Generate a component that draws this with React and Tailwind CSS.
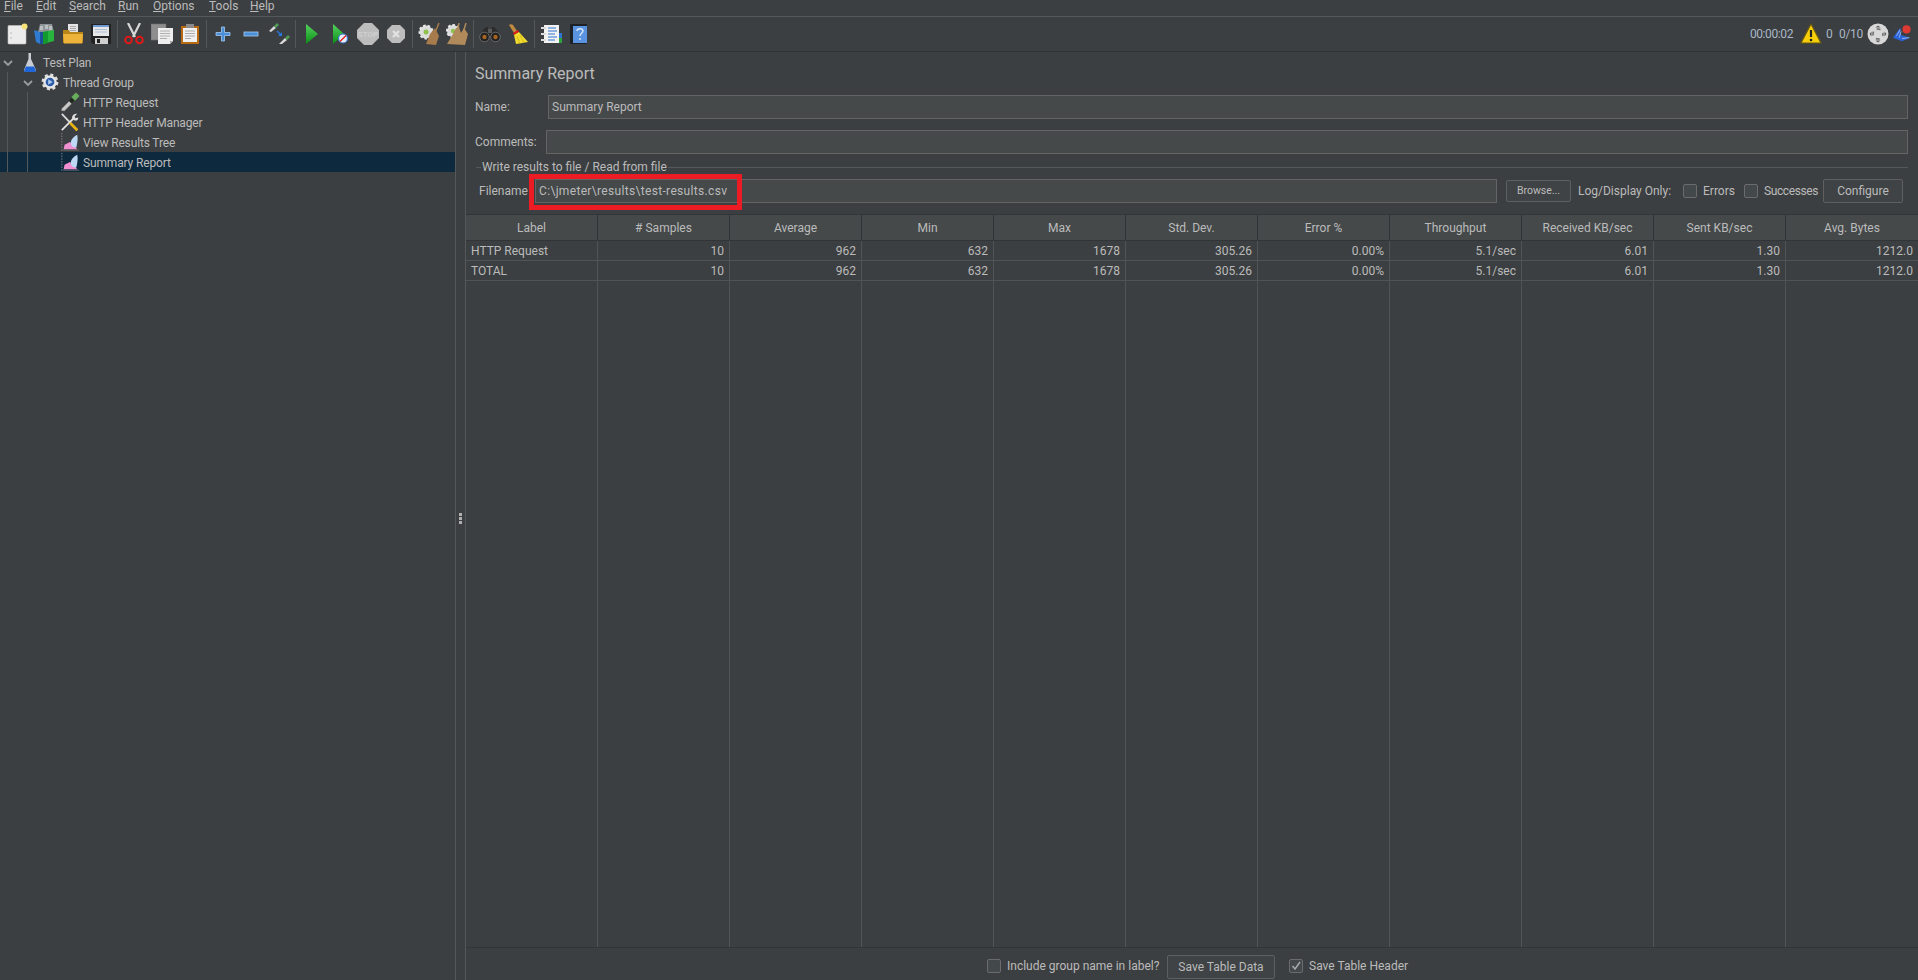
const FONT = 'font-["Roboto",sans-serif]';

const menus = [
  ['F', 'ile', 'w-[32px]'],
  ['E', 'dit', 'w-[33px]'],
  ['S', 'earch', 'w-[49px]'],
  ['R', 'un', 'w-[35px]'],
  ['O', 'ptions', 'w-[56px]'],
  ['T', 'ools', 'w-[41px]'],
  ['H', 'elp', 'w-[30px]'],
];

const columns = ['Label', '# Samples', 'Average', 'Min', 'Max', 'Std. Dev.', 'Error %', 'Throughput', 'Received KB/sec', 'Sent KB/sec', 'Avg. Bytes'];

const rows = [
  ['HTTP Request', '10', '962', '632', '1678', '305.26', '0.00%', '5.1/sec', '6.01', '1.30', '1212.0'],
  ['TOTAL', '10', '962', '632', '1678', '305.26', '0.00%', '5.1/sec', '6.01', '1.30', '1212.0'],
];

function Ico({ children, w = 22, h = 22 }) {
  return (
    <svg width={w} height={h} viewBox="0 0 22 22" className="block shrink-0">
      {children}
    </svg>
  );
}

function NewIcon() {
  return (
    <Ico>
      <rect x="2" y="2.500" width="18" height="18.500" rx="1" fill="#ececec" stroke="#c4c4c4" strokeWidth="0.6" />
      <circle cx="18.500" cy="3.500" r="3" fill="#f7e27a" />
      <circle cx="5" cy="10" r="0.7" fill="#aaa" />
      <circle cx="5" cy="15" r="0.7" fill="#aaa" />
    </Ico>
  );
}

function TemplatesIcon() {
  return (
    <Ico>
      <path d="M4 9l2-8h12l2 8z" fill="#8d9397" />
      <path d="M6 3h3v4H6zM11 2h3v4h-3zM15 3h3v4h-3z" fill="#b9bec0" />
      <path d="M0 7l6 2v12l-4-2z" fill="#2e7bd0" />
      <path d="M6 9h3v12H6z" fill="#1d4f9a" />
      <path d="M9 9l11-2v11L9 21z" fill="#27b33c" />
      <path d="M9 9l5-1v12l-5 1z" fill="#129a2e" />
    </Ico>
  );
}

function OpenIcon() {
  return (
    <Ico>
      <path d="M6 1h10v10H6z" fill="#e4e4e4" />
      <path d="M8 3.500h6M8 5.500h6M8 7.500h6" stroke="#9a9a9a" strokeWidth="0.8" />
      <path d="M1 7h6l1 2h13v11H1z" fill="#b88518" />
      <path d="M1 11h20l-1 9.500H2z" fill="#eeb33b" />
    </Ico>
  );
}

function SaveIcon() {
  return (
    <Ico>
      <path d="M1 1h20v20H3l-2-2z" fill="#222" />
      <rect x="3" y="2" width="16" height="11" fill="#e7e7e7" />
      <rect x="3" y="2" width="16" height="2" fill="#6f9ad3" />
      <path d="M5 6.500h12M5 9h12" stroke="#9fb6d2" strokeWidth="0.8" />
      <rect x="5" y="15" width="13" height="6" fill="#cfcfcf" />
      <rect x="7" y="16" width="3" height="4" fill="#222" />
    </Ico>
  );
}

function CutIcon() {
  return (
    <Ico>
      <path d="M5 0l7 14M17 0L10 14" stroke="#d8d8d8" strokeWidth="2.200" />
      <circle cx="5.500" cy="17" r="3.300" fill="none" stroke="#e01818" strokeWidth="2" />
      <circle cx="16.500" cy="17" r="3.300" fill="none" stroke="#e01818" strokeWidth="2" />
    </Ico>
  );
}

function CopyIcon() {
  return (
    <Ico>
      <rect x="0" y="1" width="15" height="16" fill="#8e8e8e" stroke="#6e6e6e" strokeWidth="0.6" />
      <path d="M7 5h15v13l-3 3H7z" fill="#eeeeee" />
      <path d="M19 21v-3h3z" fill="#aaa" />
      <path d="M9 8h10M9 10.500h10M9 13h10M9 15.500h7" stroke="#a0a0a0" strokeWidth="0.8" />
    </Ico>
  );
}

function PasteIcon() {
  return (
    <Ico>
      <rect x="2" y="3" width="18" height="18" fill="#b86a10" />
      <rect x="4" y="5" width="14" height="14" fill="#f1f1f1" />
      <rect x="7" y="1" width="8" height="4" fill="#8b8b8b" />
      <path d="M6 8h10M6 10.500h10M6 13h10M6 15.500h6" stroke="#9a9a9a" strokeWidth="0.8" />
    </Ico>
  );
}

function PlusIcon() {
  return (
    <Ico>
      <path d="M9.500 4h3v5.500H18v3h-5.500V18h-3v-5.500H4v-3h5.500z" fill="#4a90d9" stroke="#a7c8ee" strokeWidth="0.8" />
    </Ico>
  );
}

function MinusIcon() {
  return (
    <Ico>
      <rect x="4" y="9" width="14" height="4" fill="#4a90d9" stroke="#a7c8ee" strokeWidth="0.8" />
    </Ico>
  );
}

function ToggleIcon() {
  return (
    <Ico>
      <path d="M1 8l5-5 2 2-5 4z" fill="#d8d8d8" />
      <path d="M6 3l3-3 2 2-3 3z" fill="#4f9a55" />
      <path d="M9 8l4 4" stroke="#2478e0" strokeWidth="1.200" />
      <path d="M14 13V9l-4 4z" fill="#2478e0" />
      <path d="M11 21l6-6 2 2-5 4z" fill="#d8d8d8" />
      <path d="M17 15l3-3 2 2-3 3z" fill="#4f9a55" />
    </Ico>
  );
}

function PlayIcon() {
  return (
    <Ico>
      <defs>
        <linearGradient id="pg" x1="0" y1="0" x2="0" y2="1">
          <stop offset="0" stopColor="#54d25e" />
          <stop offset="1" stopColor="#0b8f16" />
        </linearGradient>
      </defs>
      <path d="M5 1l12 10L5 21z" fill="url(#pg)" />
    </Ico>
  );
}

function PlayNoTimerIcon() {
  return (
    <Ico>
      <path d="M4 1l11 10L4 21z" fill="url(#pg)" />
      <circle cx="14" cy="15.500" r="4.500" fill="#e8eef7" stroke="#3a78d0" strokeWidth="1.200" />
      <path d="M11 18.500l6-6" stroke="#e01818" strokeWidth="1.300" />
    </Ico>
  );
}

function StopIcon() {
  return (
    <Ico>
      <path d="M7 0h8l7 7v8l-7 7H7l-7-7V7z" fill="#bdbdbd" />
      <text x="11" y="14" textAnchor="middle" fontSize="8" fontWeight="700" fill="#cfcfcf">STOP</text>
    </Ico>
  );
}

function ShutdownIcon() {
  return (
    <Ico>
      <path d="M7 2h8l5 5v8l-5 5H7l-5-5V7z" fill="#bdbdbd" />
      <path d="M8 8l6 6M14 8l-6 6" stroke="#e2e2e2" strokeWidth="2.400" />
    </Ico>
  );
}

function ClearIcon() {
  return (
    <Ico>
      <circle cx="8" cy="9" r="6.500" fill="#dcdcdc" stroke="#e8e8e8" strokeWidth="2" strokeDasharray="2.500 2" />
      <circle cx="8" cy="9" r="2.500" fill="#8ec04a" />
      <path d="M17 5l-5 6-4 10 10 1 3-9z" fill="#a77b4c" />
      <path d="M21 0l-4 10" stroke="#a77b4c" strokeWidth="1.500" />
    </Ico>
  );
}

function ClearAllIcon() {
  return (
    <Ico>
      <circle cx="7" cy="8" r="6" fill="#dcdcdc" stroke="#e8e8e8" strokeWidth="2" strokeDasharray="2.500 2" />
      <circle cx="7" cy="8" r="2.200" fill="#8ec04a" />
      <path d="M10 5L7 11 1 21l18 1 3-11-4-6-3 5-2-6z" fill="#b18a5b" />
      <path d="M13 0l-2 9M20 0l-3 10" stroke="#b18a5b" strokeWidth="1.500" />
    </Ico>
  );
}

function SearchIcon() {
  return (
    <Ico>
      <path d="M4 7l3-3h2v4h4V4h2l3 3 3 6H1z" fill="#2c2c2c" />
      <rect x="9" y="6" width="4" height="4" fill="#5a5a5a" />
      <circle cx="5.500" cy="14" r="4.800" fill="#222" stroke="#777" strokeWidth="0.8" />
      <circle cx="16.500" cy="14" r="4.800" fill="#222" stroke="#777" strokeWidth="0.8" />
      <circle cx="5.500" cy="14" r="2.200" fill="#a8641e" />
      <circle cx="16.500" cy="14" r="2.200" fill="#a8641e" />
    </Ico>
  );
}

function BroomIcon() {
  return (
    <Ico>
      <path d="M2 2c1-1 3-1 4 0l4 6-3 2z" fill="#c08a40" />
      <path d="M6 10l5-3 1 2-5 3z" fill="#e01818" />
      <path d="M7 12l5-3 9 10-12 2z" fill="#f2dc2e" />
      <path d="M10 13l3 8M13 12l4 8" stroke="#c9a90e" strokeWidth="0.7" />
    </Ico>
  );
}

function FunctionIcon() {
  return (
    <Ico>
      <rect x="4" y="2" width="15" height="18" fill="#f2f2f2" />
      <path d="M8 5h8M8 8h9M8 11h7M8 14h9M8 17h7" stroke="#2f74d0" strokeWidth="1" />
      <path d="M1 5h5M1 11h5M1 17h5" stroke="#dcdcdc" strokeWidth="2" />
      <rect x="19" y="10" width="3" height="5" fill="#2f74d0" />
      <rect x="19" y="15" width="3" height="5" fill="#2ea23c" />
    </Ico>
  );
}

function HelpIcon() {
  return (
    <Ico>
      <rect x="2" y="1" width="17" height="20" rx="1" fill="#1d2126" />
      <rect x="5" y="3" width="14" height="17" fill="#5a94e0" />
      <path d="M9 8c0-3 6-3 6 0 0 2-3 2-3 5M12 15v2" fill="none" stroke="#d8e6f8" strokeWidth="1.400" />
    </Ico>
  );
}

function WarnIcon() {
  return (
    <Ico>
      <path d="M11 1l10 19H1z" fill="#f6cf0a" stroke="#6b5a10" strokeWidth="1.200" strokeLinejoin="round" />
      <path d="M11 7v7" stroke="#222" strokeWidth="2.200" />
      <circle cx="11" cy="17" r="1.300" fill="#222" />
    </Ico>
  );
}

function ExpandIcon() {
  return (
    <Ico>
      <circle cx="11" cy="11" r="10.500" fill="#d8d8d8" />
      <path d="M8.500 4.500L11 2.500l2.500 2zM8.500 17.500l2.500 2 2.500-2zM4.500 8.500l-2 2.500 2 2.500zM17.500 8.500l2 2.500-2 2.500z" fill="#5e5e5e" />
      <circle cx="11" cy="11" r="5" fill="none" stroke="#6e6e6e" strokeWidth="1.600" strokeDasharray="4 3.850" strokeDashoffset="2" />
    </Ico>
  );
}

function LogoIcon() {
  return (
    <Ico w={20} h={20}>
      <path d="M1 15l8-11 1 8 10 3-9 4z" fill="#2b63d8" />
      <path d="M5 13l4-7M8 15l2-7M11 16l8-1" stroke="#bcd0f4" strokeWidth="0.8" />
      <circle cx="16" cy="6" r="4.500" fill="#dc3a33" />
    </Ico>
  );
}

function FlaskIcon() {
  return (
    <svg width="14" height="19" viewBox="0 0 14 19" className="block shrink-0">
      <path d="M5.500 0h2.500v6l5 11c0 1-1 2-2 2H3c-1 0-2-1-2-2L5.500 6z" fill="#c9ced4" />
      <path d="M3 13.500h8l2 4.500c-.4.7-1 1-2 1H3c-1 0-1.600-.3-2-1z" fill="#1f66d8" />
    </svg>
  );
}

function GearIcon() {
  return (
    <Ico w={20} h={20}>
      <circle cx="11" cy="11" r="7.500" fill="#e0e0e0" stroke="#e0e0e0" strokeWidth="3.500" strokeDasharray="3.200 2.700" />
      <circle cx="11" cy="11" r="6.500" fill="#e8e8e8" />
      <circle cx="11" cy="11" r="4.800" fill="#2c5ca8" />
      <path d="M9 8l5 3-5 3z" fill="#a8c8ee" />
    </Ico>
  );
}

function DropperIcon() {
  return (
    <Ico w={20} h={20}>
      <path d="M1 21l1-3 8-8 3 3-8 8z" fill="#c8c8c8" stroke="#4a4a4a" strokeWidth="0.8" />
      <path d="M10 9l3-3 3 3-3 3z" fill="#1f2a1f" />
      <path d="M12.500 5.500l5-5 4 4-5 5z" fill="#67ad5c" />
    </Ico>
  );
}

function ToolsIcon() {
  return (
    <Ico w={20} h={20}>
      <path d="M2 2l17 18" stroke="#d9d9d9" strokeWidth="2" />
      <path d="M2 20L16 6" stroke="#e3e3e3" strokeWidth="2" />
      <path d="M11 12l8 8" stroke="#e8b40c" strokeWidth="3" />
      <path d="M14 8c-2-3 1-7 5-6l-3 3 1 2 3-1c.5 3-3 5-6 2z" fill="#e0e0e0" />
    </Ico>
  );
}

function ChartIcon() {
  return (
    <Ico w={20} h={20}>
      <path d="M2 1v20" stroke="#8a8a8a" strokeWidth="1" strokeDasharray="1.500 1.500" />
      <path d="M3 20h18" stroke="#6a6a6a" strokeWidth="1" />
      <path d="M4 19l1-5 6-3 4 3 4 5z" fill="#ef8fd2" />
      <path d="M12 12c0-4 3-7 7-9 1 5 0 9-1 14-3 0-6-1-6-5z" fill="#bcd8f4" />
    </Ico>
  );
}

function Chevron() {
  return (
    <svg width="10" height="6" viewBox="0 0 10 6" className="block">
      <path d="M1 1l4 4 4-4" fill="none" stroke="#9a9da0" strokeWidth="1.800" />
    </svg>
  );
}

function ToolButton({ children }) {
  return <div className="flex h-[28px] w-[28px] items-center justify-center">{children}</div>;
}

function ToolSep() {
  return (
    <div className="flex h-[28px] w-[5px] justify-center">
      <div className="h-full w-px bg-[#55585a]" />
    </div>
  );
}

function Toolbar() {
  return (
    <div className="flex h-[35px] shrink-0 items-center border-b border-[#2f3233] pl-[3px] pr-[6px]">
      <ToolButton><NewIcon /></ToolButton>
      <ToolButton><TemplatesIcon /></ToolButton>
      <ToolButton><OpenIcon /></ToolButton>
      <ToolButton><SaveIcon /></ToolButton>
      <ToolSep />
      <ToolButton><CutIcon /></ToolButton>
      <ToolButton><CopyIcon /></ToolButton>
      <ToolButton><PasteIcon /></ToolButton>
      <ToolSep />
      <ToolButton><PlusIcon /></ToolButton>
      <ToolButton><MinusIcon /></ToolButton>
      <ToolButton><ToggleIcon /></ToolButton>
      <ToolSep />
      <ToolButton><PlayIcon /></ToolButton>
      <ToolButton><PlayNoTimerIcon /></ToolButton>
      <ToolButton><StopIcon /></ToolButton>
      <ToolButton><ShutdownIcon /></ToolButton>
      <ToolSep />
      <ToolButton><ClearIcon /></ToolButton>
      <ToolButton><ClearAllIcon /></ToolButton>
      <ToolSep />
      <ToolButton><SearchIcon /></ToolButton>
      <ToolButton><BroomIcon /></ToolButton>
      <ToolSep />
      <ToolButton><FunctionIcon /></ToolButton>
      <ToolButton><HelpIcon /></ToolButton>
      <div className="ml-auto flex items-center text-[#a9b7c6]">
        <span className="tracking-[-0.4px]">00:00:02</span>
        <div className="ml-[7px]"><WarnIcon /></div>
        <span className="ml-[4px] w-[6px]">0</span>
        <span className="ml-[7px] w-[23px] whitespace-nowrap tracking-[-0.3px]">0/10</span>
        <div className="ml-[5px]"><ExpandIcon /></div>
        <div className="ml-[3px]"><LogoIcon /></div>
      </div>
    </div>
  );
}

function TreeRow({ icon, label, pad, selected }) {
  return (
    <div className={`flex h-[20px] items-center ${pad} ${selected ? 'bg-[#0d293e]' : ''}`}>
      {icon}
      <span className="ml-[3px] whitespace-nowrap pt-[2px] tracking-[-0.15px]">{label}</span>
    </div>
  );
}

function Tree() {
  return (
    <div className="relative w-[456px] shrink-0 border-r border-[#55585a]">
      <TreeRow pad="pl-[23px] gap-[3px]" icon={<FlaskIcon />} label="Test Plan" />
      <TreeRow pad="pl-[40px]" icon={<GearIcon />} label="Thread Group" />
      <TreeRow pad="pl-[60px]" icon={<DropperIcon />} label="HTTP Request" />
      <TreeRow pad="pl-[60px]" icon={<ToolsIcon />} label="HTTP Header Manager" />
      <TreeRow pad="pl-[60px]" icon={<ChartIcon />} label="View Results Tree" />
      <TreeRow pad="pl-[60px]" icon={<ChartIcon />} label="Summary Report" selected />
      <div className="absolute left-[7px] top-[20px] h-[100px] w-px bg-[#55585a]" />
      <div className="absolute left-[27px] top-[40px] h-[80px] w-px bg-[#55585a]" />
      <div className="absolute left-[3px] top-[8px]"><Chevron /></div>
      <div className="absolute left-[23px] top-[28px]"><Chevron /></div>
    </div>
  );
}

function Splitter() {
  return (
    <div className="flex w-[9px] shrink-0 flex-col items-center justify-center gap-[1px] pt-[5px]">
      <div className="h-[3px] w-[3px] bg-[#b0b0b0]" />
      <div className="h-[3px] w-[3px] bg-[#b0b0b0]" />
      <div className="h-[3px] w-[3px] bg-[#b0b0b0]" />
    </div>
  );
}

function Field({ className, children }) {
  return (
    <div className={`flex h-[24px] items-center border border-[#646464] bg-[#45494a] pl-[3px] ${className}`}>
      {children}
    </div>
  );
}

function Check({ checked }) {
  return (
    <div className="flex h-[14px] w-[14px] shrink-0 items-center justify-center rounded-[2px] border border-[#6b6b6b] bg-[#43494a]">
      {checked ? (
        <svg width="10" height="10" viewBox="0 0 10 10">
          <path d="M1.500 5l2.500 3 5-7" fill="none" stroke="#a9a9a9" strokeWidth="1.500" />
        </svg>
      ) : null}
    </div>
  );
}

function Button({ className, children }) {
  return (
    <div className={`flex items-center justify-center rounded-[2px] border border-[#5e6060] bg-[#3f4345] ${className}`}>
      {children}
    </div>
  );
}

function Report() {
  return (
    <div className="flex min-w-0 flex-1 flex-col border-l border-[#55585a]">
      <div className="flex flex-col pl-[9px] pr-[10px]">
        <div className="mt-[11px] h-[22px] text-[16px] leading-[22px]">Summary Report</div>
        <div className="mt-[10px] flex items-center">
          <span className="w-[73px] shrink-0">Name:</span>
          <Field className="flex-1">Summary Report</Field>
        </div>
        <div className="mt-[11px] flex items-center">
          <span className="w-[71px] shrink-0">Comments:</span>
          <Field className="flex-1" />
        </div>
        <div className="mt-[5px] flex h-[16px] items-center pl-[1px]">
          <div className="h-px w-[5px] bg-[#55585a]" />
          <span className="whitespace-nowrap px-[1px]">Write results to file / Read from file</span>
          <div className="h-px flex-1 bg-[#55585a]" />
        </div>
        <div className="mt-[4px] flex items-center pl-[4px]">
          <span className="w-[56px] shrink-0">Filename</span>
          <div className="relative flex-1">
            <Field className="w-full tracking-[0.33px]">C:\jmeter\results\test-results.csv</Field>
            <div className="absolute left-[-6px] top-[-5px] h-[36px] w-[213px] border-[5px] border-[#ed1c24]" />
          </div>
          <Button className="ml-[9px] h-[22px] w-[65px] text-[10.5px]">Browse...</Button>
          <span className="ml-[7px] w-[94px] whitespace-nowrap">Log/Display Only:</span>
          <div className="ml-[11px]"><Check /></div>
          <span className="ml-[6px] w-[30px]">Errors</span>
          <div className="ml-[11px]"><Check /></div>
          <span className="ml-[6px] w-[52px] tracking-[-0.4px]">Successes</span>
          <Button className="ml-[7px] mr-[5px] h-[24px] w-[80px]">Configure</Button>
        </div>
      </div>
      <Table />
      <div className="flex h-[33px] shrink-0 items-center justify-center border-t border-[#323537] pl-[7px] pt-[3px]">
        <Check />
        <span className="ml-[6px] w-[153px] whitespace-nowrap">Include group name in label?</span>
        <Button className="ml-[7px] mt-[2px] h-[24px] w-[108px]">Save Table Data</Button>
        <div className="ml-[14px]"><Check checked /></div>
        <span className="ml-[6px] w-[95px] whitespace-nowrap">Save Table Header</span>
      </div>
    </div>
  );
}

function Table() {
  return (
    <div className="mt-[11px] flex min-h-0 flex-1 flex-col border-t border-[#323537]">
      <div className="grid h-[26px] shrink-0 grid-cols-11 border-b border-[#323537] bg-[#45494a]">
        {columns.map((c) => (
          <div key={c} className="flex items-center justify-center border-r border-[#323537] last:border-r-0">{c}</div>
        ))}
      </div>
      {rows.map((row) => (
        <div key={row[0]} className="grid h-[20px] shrink-0 grid-cols-11 border-b border-[#515455]">
          {row.map((v, i) => (
            <div
              key={i}
              className={`flex items-center border-r border-[#515455] last:border-r-0 ${i === 0 ? 'pl-[5px]' : 'justify-end pr-[5px]'}`}
            >
              {v}
            </div>
          ))}
        </div>
      ))}
      <div className="grid min-h-0 flex-1 grid-cols-11">
        {columns.map((c) => (
          <div key={c} className="border-r border-[#515455] last:border-r-0" />
        ))}
      </div>
    </div>
  );
}

export default function App() {
  return (
    <div className={`flex h-[980px] w-[1918px] flex-col overflow-hidden bg-[#3c3f41] text-[12px] leading-[16px] text-[#bbbbbb] ${FONT}`}>
      <div className="flex h-[17px] shrink-0 items-start border-b border-[#55585a] pl-[4px] leading-[12px]">
        {menus.map(([a, b, w]) => (
          <span key={a} className={`whitespace-nowrap ${w}`}>
            <span className="underline underline-offset-1">{a}</span>{b}
          </span>
        ))}
      </div>
      <Toolbar />
      <div className="flex min-h-0 flex-1">
        <Tree />
        <Splitter />
        <Report />
      </div>
    </div>
  );
}
